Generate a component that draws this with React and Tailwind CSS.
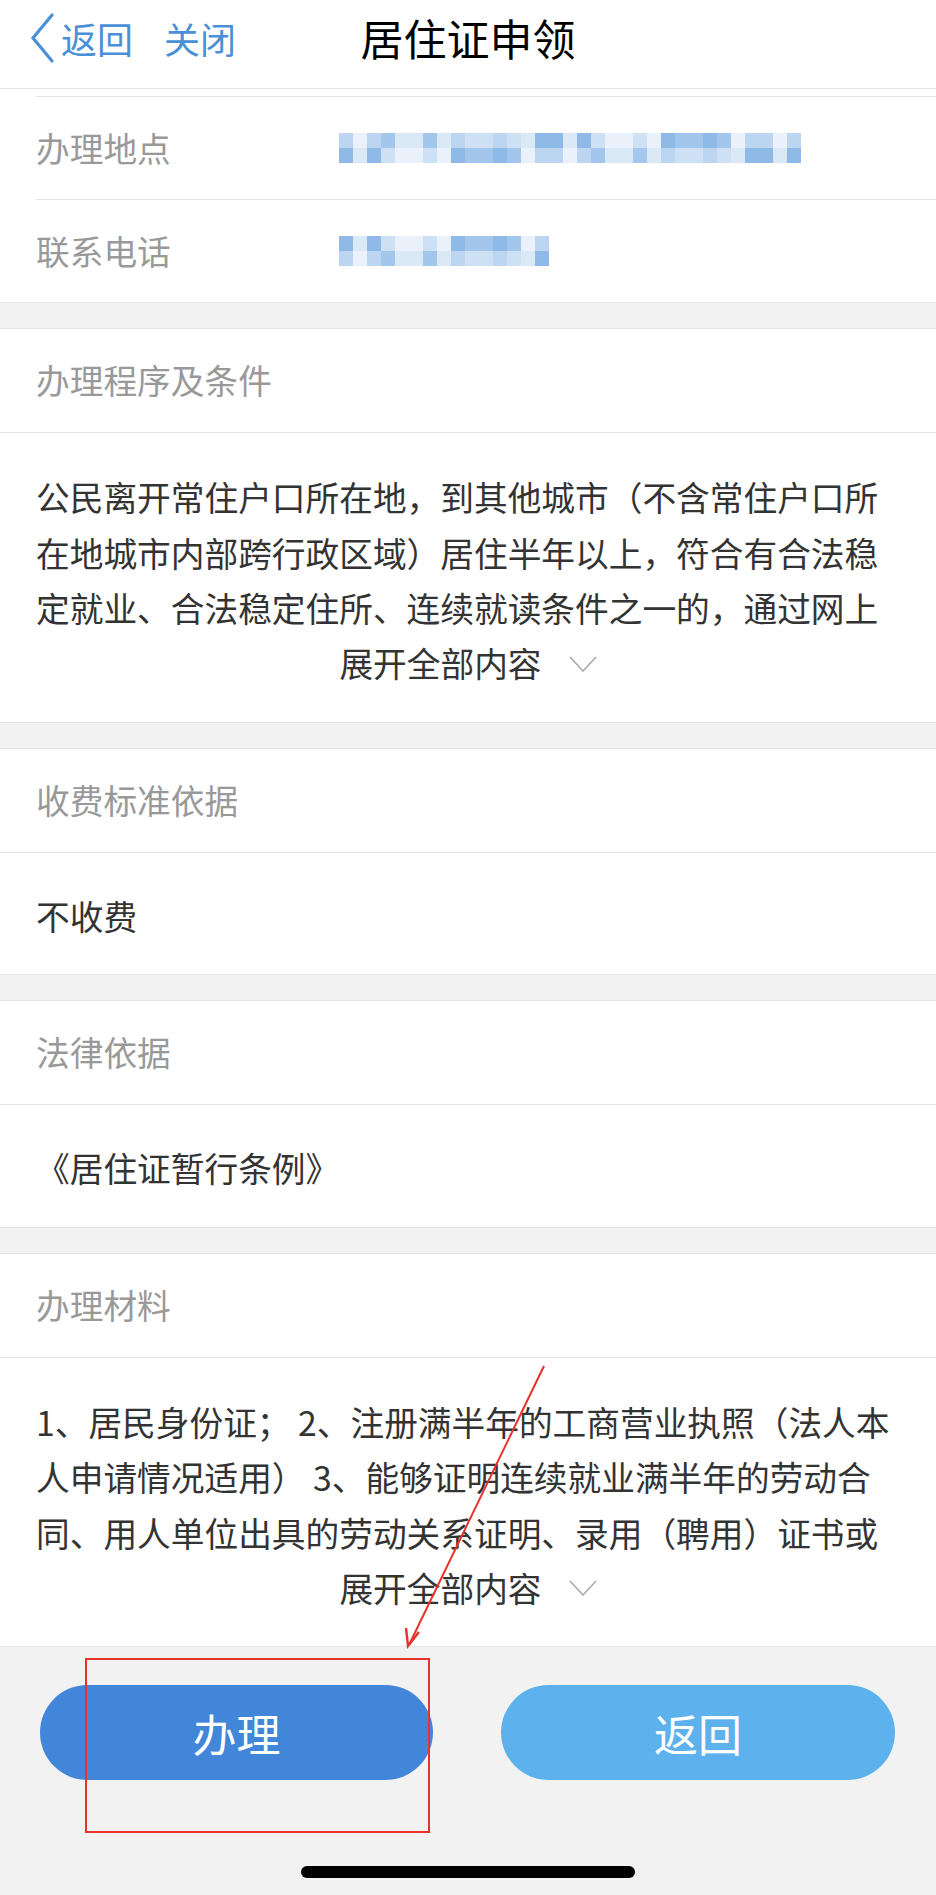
import React from "react";

const font = { fontFamily: '"Noto Sans CJK SC", "Noto Sans", sans-serif' };

const shades = [
  "bg-[#dbe8f6]",
  "bg-[#bcd5f0]",
  "bg-[#a3c6ec]",
  "bg-[#eaf1fa]",
  "bg-[#8fb9e6]",
  "bg-[#cde0f4]",
];

const Mosaic = ({ cols, seed }) => {
  const cells = [];
  for (let r = 0; r < 2; r++) {
    for (let c = 0; c < cols; c++) {
      const i = (c * 7 + r * 3 + seed + ((c * c) % 5)) % shades.length;
      cells.push(<div key={`${r}-${c}`} className={`h-[15px] w-[14px] ${shades[i]}`} />);
    }
  }
  return (
    <div className="grid" style={{ gridTemplateColumns: `repeat(${cols}, 14px)` }}>
      {cells}
    </div>
  );
};

const Gap = () => <div className="h-[27px] border-y border-[#e4e4e4] bg-[#f2f2f2]" />;

const SectionTitle = ({ children }) => (
  <div className="flex h-[104px] items-center border-b border-[#e4e4e4] px-[36px] text-[33.7px] text-[#999]">
    {children}
  </div>
);

const Expand = () => (
  <div className="flex h-[56px] items-center justify-center gap-[27px] text-[33.7px] text-[#333]">
    <span>展开全部内容</span>
    <svg width="28" height="16" viewBox="0 0 28 16" fill="none">
      <path d="M1 1 L14 15 L27 1" stroke="#aaa" strokeWidth="1.6" />
    </svg>
  </div>
);

const Paragraph = ({ lines }) => (
  <div className="pb-[30px] pt-[36px]">
    <div className="px-[36px] text-[33.7px] leading-[55.5px] text-[#333]">
      {lines.map((l) => (
        <div key={l} className="whitespace-nowrap">
          {l}
        </div>
      ))}
    </div>
    <Expand />
  </div>
);

const Single = ({ children }) => (
  <div className="px-[36px] pb-[31px] pt-[35px] text-[33.7px] leading-[55.5px] text-[#333]">{children}</div>
);

export default function App() {
  return (
    <div className="relative flex h-[1895px] w-[936px] flex-col overflow-hidden bg-white" style={font}>
      {/* header */}
      <header className="grid h-[89px] grid-cols-[1fr_auto_1fr] items-center border-b border-[#e4e4e4] pb-[13px]">
        <div className="flex items-center text-[36px] text-[#4a90d6]">
          <svg className="ml-[29px]" width="26" height="50" viewBox="0 0 26 50" fill="none">
            <path d="M23 2 L4 25 L23 48" stroke="#4a90d6" strokeWidth="3.2" strokeLinecap="round" />
          </svg>
          <span className="ml-[6px]">返回</span>
          <span className="ml-[31px]">关闭</span>
        </div>
        <div className="text-[43px] text-black">居住证申领</div>
        <div />
      </header>

      <div className="h-[7px]" />
      <div className="pl-[36px]">
        <div className="border-t border-[#e4e4e4]" />
        <div className="flex h-[103px] items-center border-b border-[#e4e4e4]">
          <span className="w-[303px] text-[33.7px] text-[#999]">办理地点</span>
          <Mosaic cols={33} seed={1} />
        </div>
        <div className="flex h-[102px] items-center">
          <span className="w-[303px] text-[33.7px] text-[#999]">联系电话</span>
          <Mosaic cols={15} seed={4} />
        </div>
      </div>

      <Gap />
      <SectionTitle>办理程序及条件</SectionTitle>
      <Paragraph
        lines={[
          "公民离开常住户口所在地，到其他城市（不含常住户口所",
          "在地城市内部跨行政区域）居住半年以上，符合有合法稳",
          "定就业、合法稳定住所、连续就读条件之一的，通过网上",
        ]}
      />

      <Gap />
      <SectionTitle>收费标准依据</SectionTitle>
      <Single>不收费</Single>

      <Gap />
      <SectionTitle>法律依据</SectionTitle>
      <Single>《居住证暂行条例》</Single>

      <Gap />
      <SectionTitle>办理材料</SectionTitle>
      <Paragraph
        lines={[
          "1、居民身份证； 2、注册满半年的工商营业执照（法人本",
          "人申请情况适用） 3、能够证明连续就业满半年的劳动合",
          "同、用人单位出具的劳动关系证明、录用（聘用）证书或",
        ]}
      />

      {/* footer */}
      <footer className="flex flex-1 flex-col items-center border-t border-[#e4e4e4] bg-[#f2f2f2] pt-[38px]">
        <div className="flex w-full gap-[68px] px-[40px]">
          <button className="h-[95px] w-[393px] rounded-full bg-[#4286da] text-[44px] text-white">办理</button>
          <button className="h-[95px] w-[394px] rounded-full bg-[#5db2ee] text-[44px] text-white">返回</button>
        </div>
        <div className="mt-[86px] h-[12px] w-[334px] rounded-full bg-black" />
      </footer>

      {/* annotation overlays */}
      <div className="absolute left-[85px] top-[1658px] h-[175px] w-[345px] border-2 border-[#e8322b]" />
      <svg className="absolute left-0 top-0" width="936" height="1895" viewBox="0 0 936 1895" fill="none">
        <path d="M544 1366 L409 1645" stroke="#e8322b" strokeWidth="2" />
        <path d="M406 1628 L408 1646 L419 1632" stroke="#e8322b" strokeWidth="2.4" strokeLinejoin="miter" />
      </svg>
    </div>
  );
}
